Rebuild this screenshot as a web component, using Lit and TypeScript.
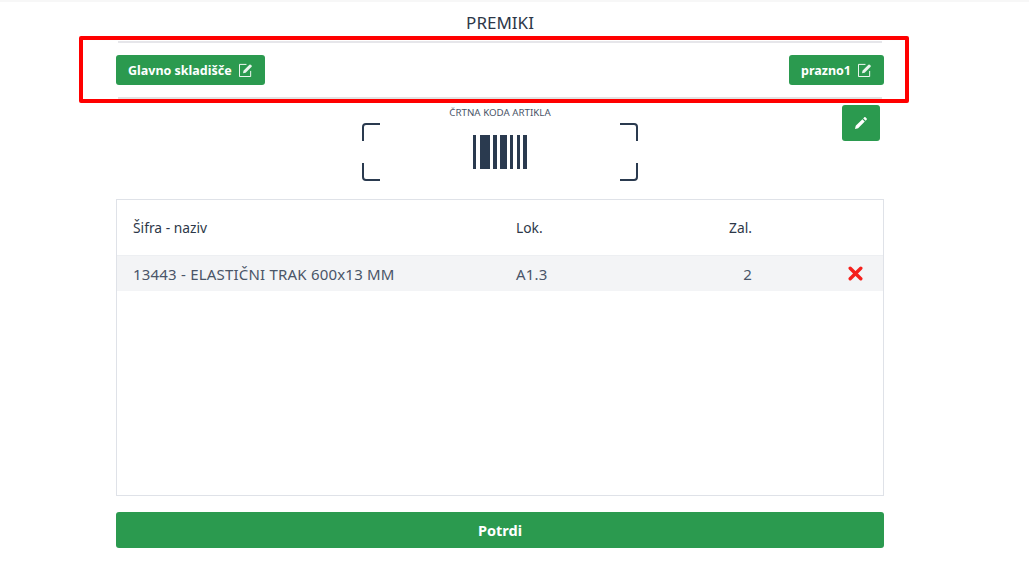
import { LitElement, html, css, svg } from "lit";
import { customElement } from "lit/decorators.js";

const editIcon = svg`<svg class="ico" viewBox="0 0 15 15" width="14" height="14" fill="none">
<path d="M12.5 8.5v6H.5V1.5H8" stroke="currentColor" stroke-width="1"/>
<path d="M4.8 8.2 11.2 1.8a1 1 0 0 1 1.3 0l1 1a1 1 0 0 1 0 1.3L7.1 10.5 4.3 11z" fill="currentColor" fill-opacity="0.9"/></svg>`;

@customElement("app-root")
export class AppRoot extends LitElement {
  static styles = css`
    :host { display: block; width: 1029px; height: 565px; position: relative; overflow: hidden; background: #fff;
      font-family: "Noto Sans", "Open Sans", sans-serif; color: #2d3748; }
    .strip { height: 2px; background: #f7f7f7; }
    .page { width: 768px; margin-left: 116px; display: flex; flex-direction: column; }
    h1 { margin: 0; height: 39px; display: flex; align-items: center; justify-content: center; padding-top: 3px; box-sizing: border-box;
      font-size: 17px; font-weight: 400; line-height: 24px; color: #2d3748; }
    .bar { height: 58px; box-sizing: border-box; margin: 0 2px; border-top: 2px solid #e6e6ea; border-bottom: 2px solid #e2e2e2;
      display: flex; align-items: center; }
    .bar-in { flex: 1; margin: 0 -2px; display: flex; justify-content: space-between; }
    .btn { height: 30px; display: flex; align-items: center; gap: 7px; padding: 0 12px; background: #2b9a4f; color: #fff; border-radius: 3px;
      font-size: 12.5px; font-weight: 700; }
    .scan { position: relative; height: 100px; display: flex; flex-direction: column; align-items: center; }
    .label { font-size: 9.75px; line-height: 14px; margin-top: 7px; color: #4a5568; }
    .frame { width: 276px; height: 58px; margin-top: 3px; }
    .frame svg { display: block; }
    .pencil { position: absolute; top: 6px; right: 4px; width: 38px; height: 36px; border-radius: 3px; background: #2b9a4f; color: #fff;
      display: flex; align-items: center; justify-content: center; }
    .list { height: 297px; box-sizing: border-box; border: 1px solid #dfe2e8; display: flex; flex-direction: column; }
    .row { display: grid; grid-template-columns: 383px 150px 86px 1fr; padding-left: 16px; align-items: center; font-size: 13.8px; }
    .head { height: 55px; }
    .item { height: 36px; background: #f3f4f6; font-size: 15px; letter-spacing: 0.2px; color: #4a5568; border-top: 1px solid #edeff2; box-sizing: border-box; }
    .num { text-align: right; }
    .del { justify-self: end; margin-right: 20px; display: flex; }
    .confirm { margin-top: 16px; height: 36px; border-radius: 3px; background: #2b9a4f; color: #fff; display: flex; align-items: center; justify-content: center;
      font-size: 14.5px; font-weight: 700; }
    .annot { position: absolute; left: 79px; top: 36px; width: 830px; height: 67px; box-sizing: border-box; border: 4px solid #ff0000; border-radius: 2px; pointer-events: none; }
  `;

  render() {
    return html`
      <div class="strip"></div>
      <div class="page">
        <h1>PREMIKI</h1>
        <div class="bar"><div class="bar-in">
          <div class="btn"><span>Glavno skladišče</span>${editIcon}</div>
          <div class="btn"><span>prazno1</span>${editIcon}</div>
        </div></div>
        <div class="scan">
          <div class="label">ČRTNA KODA ARTIKLA</div>
          <div class="frame">
            <svg width="276" height="58" viewBox="0 0 276 58" fill="none">
              <g stroke="#2a3a4f" stroke-width="2">
                <path d="M18 1H4a3 3 0 0 0-3 3v14"/>
                <path d="M258 1h14a3 3 0 0 1 3 3v14"/>
                <path d="M1 40v14a3 3 0 0 0 3 3h14"/>
                <path d="M275 40v14a3 3 0 0 1-3 3h-14"/>
              </g>
              <g fill="#2a3a4f">
                <rect x="111" y="12" width="3" height="34"/>
                <rect x="118" y="12" width="10" height="34"/>
                <rect x="131" y="12" width="4" height="34"/>
                <rect x="138" y="12" width="7" height="34"/>
                <rect x="148" y="12" width="3" height="34"/>
                <rect x="155" y="12" width="3" height="34"/>
                <rect x="161" y="12" width="4" height="34"/>
              </g>
            </svg>
          </div>
          <div class="pencil">
            <svg width="12" height="12" viewBox="0 0 13 13"><path d="M0 13l.8-3.4L8 2.4 10.6 5 3.4 12.2zM8.9 1.5 10 .4a1 1 0 0 1 1.4 0l1.2 1.2a1 1 0 0 1 0 1.4L11.5 4.1z" fill="currentColor"/></svg>
          </div>
        </div>
        <div class="list">
          <div class="row head"><span>Šifra - naziv</span><span>Lok.</span><span class="num">Zal.</span><span></span></div>
          <div class="row item"><span>13443 - ELASTIČNI TRAK 600x13 MM</span><span>A1.3</span><span class="num">2</span>
            <span class="del"><svg width="15" height="15" viewBox="0 0 15 15"><path d="M2.2 2.2l10.6 10.6M12.8 2.2 2.2 12.8" stroke="#f5211d" stroke-width="3.4" stroke-linecap="round"/></svg></span></div>
        </div>
        <div class="confirm">Potrdi</div>
      </div>
      <div class="annot"></div>
    `;
  }
}
